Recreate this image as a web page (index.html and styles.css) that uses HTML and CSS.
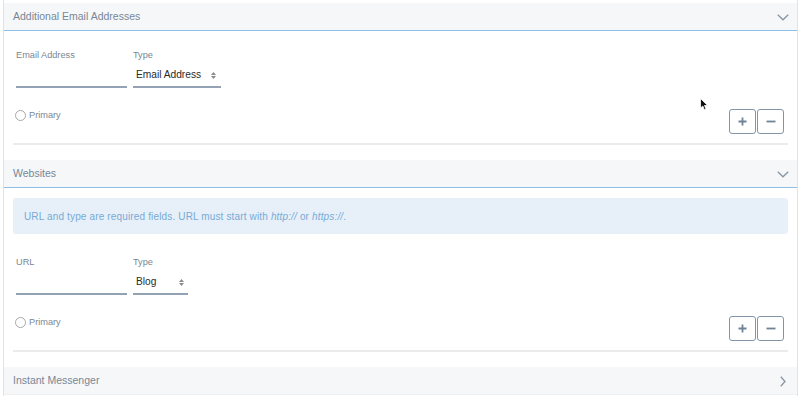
FILE: index.html
```html
<!DOCTYPE html>
<html>
<head>
<meta charset="utf-8">
<link rel="stylesheet" href="styles.css">
</head>
<body>
<div class="page">
  <section class="panel">
    <div class="panel-head">
      <span>Additional Email Addresses</span>
      <svg class="chev-down" width="12" height="7" viewBox="0 0 12 7"><polyline points="0.8,0.8 6,5.8 11.2,0.8" fill="none" stroke="#8896a4" stroke-width="1.3"/></svg>
    </div>
    <div class="panel-body">
      <div class="fields">
        <div class="field">
          <div class="label">Email Address</div>
          <div class="input w-text"></div>
        </div>
        <div class="field">
          <div class="label">Type</div>
          <div class="input select w-email">
            <span>Email Address</span>
            <svg width="5" height="7" viewBox="0 0 5 7"><polygon points="0,3 2.5,0 5,3" fill="#8a8a8a"/><polygon points="0,4 2.5,7 5,4" fill="#8a8a8a"/></svg>
          </div>
        </div>
      </div>
      <div class="row-actions">
        <label class="radio"><span class="circle"></span><span>Primary</span></label>
        <div class="btns">
          <div class="btn"><svg width="9" height="9" viewBox="0 0 9 9"><path d="M4.5 0.5v8M0.5 4.5h8" stroke="#6f8397" stroke-width="1.8"/></svg></div>
          <div class="btn"><svg width="10" height="9" viewBox="0 0 10 9"><path d="M0.5 4.5h9" stroke="#6f8397" stroke-width="1.8"/></svg></div>
        </div>
      </div>
      <div class="divider"></div>
    </div>
  </section>

  <section class="panel">
    <div class="panel-head">
      <span>Websites</span>
      <svg class="chev-down" width="12" height="7" viewBox="0 0 12 7"><polyline points="0.8,0.8 6,5.8 11.2,0.8" fill="none" stroke="#8896a4" stroke-width="1.3"/></svg>
    </div>
    <div class="panel-body">
      <div class="info">URL and type are required fields. URL must start with <i>http://</i> or <i>https://</i>.</div>
      <div class="fields fields-web">
        <div class="field">
          <div class="label">URL</div>
          <div class="input w-text"></div>
        </div>
        <div class="field">
          <div class="label">Type</div>
          <div class="input select w-blog">
            <span>Blog</span>
            <svg width="5" height="7" viewBox="0 0 5 7"><polygon points="0,3 2.5,0 5,3" fill="#8a8a8a"/><polygon points="0,4 2.5,7 5,4" fill="#8a8a8a"/></svg>
          </div>
        </div>
      </div>
      <div class="row-actions">
        <label class="radio"><span class="circle"></span><span>Primary</span></label>
        <div class="btns">
          <div class="btn"><svg width="9" height="9" viewBox="0 0 9 9"><path d="M4.5 0.5v8M0.5 4.5h8" stroke="#6f8397" stroke-width="1.8"/></svg></div>
          <div class="btn"><svg width="10" height="9" viewBox="0 0 10 9"><path d="M0.5 4.5h9" stroke="#6f8397" stroke-width="1.8"/></svg></div>
        </div>
      </div>
      <div class="divider"></div>
    </div>
  </section>

  <section class="panel">
    <div class="panel-head collapsed">
      <span>Instant Messenger</span>
      <span class="chev-box"><svg width="6" height="11" viewBox="0 0 6 11"><polyline points="0.8,0.8 5,5.5 0.8,10.2" fill="none" stroke="#8896a4" stroke-width="1.3"/></svg></span>
    </div>
  </section>

  <svg class="cursor" width="9" height="13" viewBox="0 0 9 13"><path d="M0.5 0.5 L0.5 10 L2.8 8 L4.4 11.8 L6 11.1 L4.5 7.5 L7.6 7.5 Z" fill="#111" stroke="#fff" stroke-width="0.8"/></svg>
</div>
</body>
</html>
```

FILE: styles.css
```css
html, body {
  margin: 0;
  padding: 0;
  background: #fff;
}
body {
  font-family: "Liberation Sans", Arial, sans-serif;
  width: 800px;
  height: 396px;
  overflow: hidden;
}
.page {
  position: relative;
  margin-left: 3px;
  width: 795px;
  min-height: 396px;
  border-left: 1px solid #e3e3e3;
  border-right: 1px solid #e3e3e3;
  padding-top: 3px;
  box-sizing: border-box;
}
.panel-head {
  height: 27px;
  background: #f6f7f9;
  border-bottom: 1px solid #8ebfe7;
  display: flex;
  align-items: center;
  justify-content: space-between;
  padding: 0 8px 0 9px;
  font-size: 10.5px;
  line-height: 27px;
  color: #778797;
}
.panel-head.collapsed {
  border-bottom-color: #eef0f2;
}
.chev-down {
  display: block;
  margin-top: 1px;
}
.chev-box {
  width: 12px;
  display: flex;
  justify-content: center;
  align-items: center;
  margin-top: 2px;
}
.panel-body {
  padding: 0 9px 15px 9px;
}
.fields {
  display: flex;
  gap: 6px;
  padding: 19px 0 0 3px;
}
.fields-web {
  padding-top: 23px;
}
.field {
  display: flex;
  flex-direction: column;
}
.label {
  font-size: 9.2px;
  line-height: 11px;
  height: 11px;
  color: #7a8794;
  margin-bottom: 1px;
}
.input {
  height: 24px;
  border-bottom: 2px solid #93a3b3;
  box-sizing: content-box;
}
.w-text { width: 111px; }
.w-email { width: 80px; }
.w-blog { width: 48px; }
.select {
  display: flex;
  align-items: center;
  justify-content: space-between;
  padding: 1px 5px 0 3px;
  height: 23px;
  font-size: 10.2px;
  line-height: 23px;
  color: #2a2a2a;
}
.select svg {
  display: block;
  margin-top: 1px;
}
.w-blog { padding-right: 4px; }
.row-actions {
  display: flex;
  justify-content: space-between;
  align-items: flex-start;
  margin-top: 21px;
  padding: 0 4px 0 2px;
}
.radio {
  display: flex;
  align-items: center;
  gap: 3px;
  margin-top: 1px;
  font-size: 9.2px;
  line-height: 11px;
  color: #7a8794;
}
.circle {
  width: 9px;
  height: 9px;
  border: 1px solid #a8a8a8;
  border-radius: 50%;
  background: #fff;
}
.btns {
  display: flex;
  gap: 1px;
}
.btn {
  width: 27px;
  height: 25px;
  box-sizing: border-box;
  border: 1.5px solid #8395a7;
  border-radius: 3px;
  display: flex;
  align-items: center;
  justify-content: center;
  background: #fff;
}
.btn svg { display: block; }
.divider {
  margin-top: 9px;
  height: 0;
  border-top: 2px solid #ebebeb;
}
.info {
  margin-top: 10px;
  height: 36px;
  line-height: 37px;
  background: #e7f0f9;
  border-radius: 3px;
  padding-left: 11px;
  font-size: 10px;
  letter-spacing: 0.15px;
  color: #77aad5;
}
.cursor {
  position: absolute;
  left: 696px;
  top: 98px;
}
```
